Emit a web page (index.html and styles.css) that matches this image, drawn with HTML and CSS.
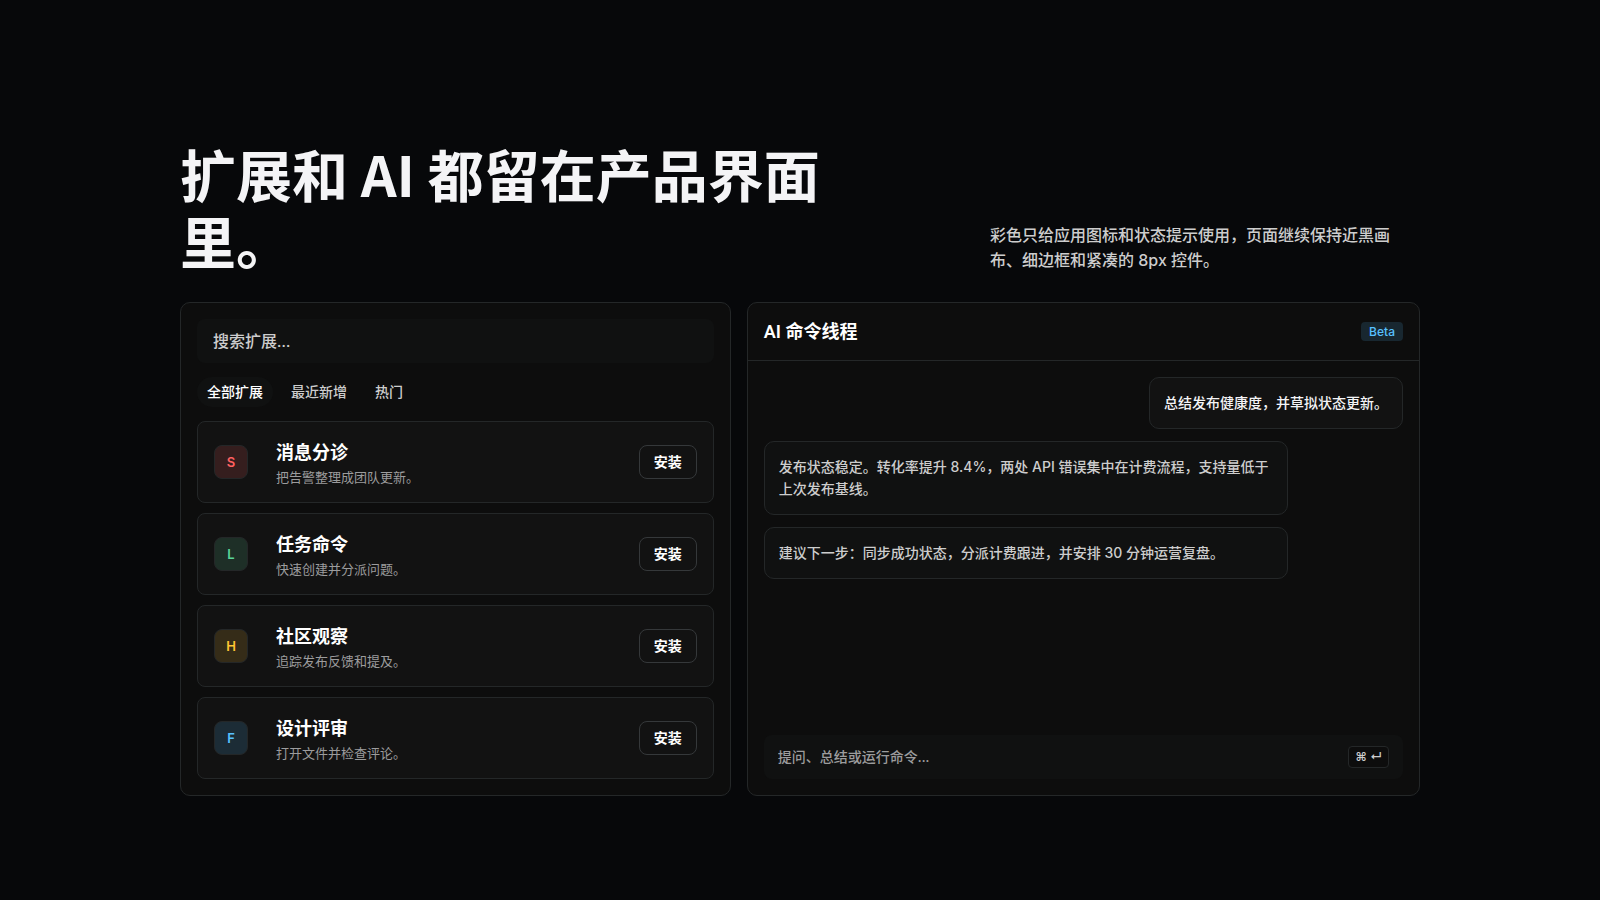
FILE: index.html
```html
<!DOCTYPE html>
<html lang="zh-CN">
<head>
    <meta charset="UTF-8">
    <meta name="viewport" content="width=device-width, initial-scale=1.0">
    <title>扩展和 AI</title>
    <link rel="stylesheet" href="styles.css">
</head>
<body>

    <main class="container">
        <header class="section-head">
            <h1>扩展和 AI 都留在产品界面里。</h1>
            <p>彩色只给应用图标和状态提示使用，页面继续保持近黑画布、细边框和紧凑的 8px 控件。</p>
        </header>

        <div class="panels">
            <section class="panel store">
                <input class="search" type="search" placeholder="搜索扩展..." aria-label="搜索扩展">
                <div class="tabs">
                    <button type="button" class="tab active">全部扩展</button>
                    <button type="button" class="tab">最近新增</button>
                    <button type="button" class="tab">热门</button>
                </div>
                <ul class="ext-list">
                    <li class="ext">
                        <span class="ext-icon red">S</span>
                        <div class="ext-text">
                            <h3>消息分诊</h3>
                            <p>把告警整理成团队更新。</p>
                        </div>
                        <button type="button" class="install-btn">安装</button>
                    </li>
                    <li class="ext">
                        <span class="ext-icon green">L</span>
                        <div class="ext-text">
                            <h3>任务命令</h3>
                            <p>快速创建并分派问题。</p>
                        </div>
                        <button type="button" class="install-btn">安装</button>
                    </li>
                    <li class="ext">
                        <span class="ext-icon yellow">H</span>
                        <div class="ext-text">
                            <h3>社区观察</h3>
                            <p>追踪发布反馈和提及。</p>
                        </div>
                        <button type="button" class="install-btn">安装</button>
                    </li>
                    <li class="ext">
                        <span class="ext-icon blue">F</span>
                        <div class="ext-text">
                            <h3>设计评审</h3>
                            <p>打开文件并检查评论。</p>
                        </div>
                        <button type="button" class="install-btn">安装</button>
                    </li>
                </ul>
            </section>

            <section class="panel chat">
                <div class="chat-head">
                    <h2>AI 命令线程</h2>
                    <span class="badge">Beta</span>
                </div>
                <div class="thread">
                    <p class="message user">总结发布健康度，并草拟状态更新。</p>
                    <p class="message reply">发布状态稳定。转化率提升 8.4%，两处 API 错误集中在计费流程，支持量低于上次发布基线。</p>
                    <p class="message reply">建议下一步：同步成功状态，分派计费跟进，并安排 30 分钟运营复盘。</p>
                </div>
                <div class="prompt">
                    <input type="text" placeholder="提问、总结或运行命令..." aria-label="提问、总结或运行命令">
                    <kbd>⌘ ↵</kbd>
                </div>
            </section>
        </div>
    </main>

</body>
</html>
```
FILE: styles.css
```css
* {
    box-sizing: border-box;
}
body {
    margin: 0;
    background-color: #07080a;
    color: #f4f4f6;
    font-family: Inter, "Noto Sans CJK SC", sans-serif;
    font-size: 16px;
    font-weight: 500;
}
h1, h2, h3, p, ul {
    margin: 0;
    padding: 0;
}
button, input {
    font-family: Roboto, "Noto Sans CJK SC", sans-serif;
    font-weight: 500;
}
button {
    cursor: pointer;
}
.container {
    max-width: 1288px;
    margin: 0 auto;
    padding: 139px 24px 96px;
}
.section-head {
    display: flex;
    justify-content: space-between;
    align-items: flex-end;
    gap: 32px;
    margin-bottom: 29px;
}
.section-head h1 {
    max-width: 680px;
    font-family: "Noto Sans CJK SC", sans-serif;
    font-size: 56px;
    font-weight: 600;
    line-height: 67px;
}
.section-head p {
    flex: 0 1 430px;
    padding-right: 24px;
    color: #cdcdcd;
    line-height: 25px;
}
.panels {
    display: grid;
    grid-template-columns: 9fr 11fr;
    gap: 16px;
}
.panel {
    min-width: 0;
    background-color: #0d0d0d;
    border: 1px solid #242728;
    border-radius: 10px;
}
.store {
    display: flex;
    flex-direction: column;
    gap: 14px;
    padding: 16px;
}
.search {
    width: 100%;
    height: 44px;
    padding: 0 16px;
    background-color: #101111;
    border: none;
    border-radius: 8px;
    color: #f4f4f6;
    font-size: 16px;
}
.search::placeholder {
    color: #cdcdcd;
}
.tabs {
    display: flex;
    gap: 8px;
}
.tab {
    height: 30px;
    padding: 0 10px 2px;
    background: none;
    border: none;
    border-radius: 15px;
    color: #cdcdcd;
    font-size: 14px;
}
.tab.active {
    background-color: #101111;
    color: #ffffff;
}
.ext-list {
    display: grid;
    gap: 10px;
    list-style: none;
}
.ext {
    display: flex;
    align-items: center;
    padding: 14px 16px;
    background-color: #121212;
    border: 1px solid #242728;
    border-radius: 8px;
}
.ext-icon {
    display: grid;
    place-items: center;
    width: 34px;
    height: 34px;
    margin-right: 28px;
    border: 1px solid #242728;
    border-radius: 8px;
    font-size: 13px;
    font-weight: 600;
}
.red {
    background-color: #351e1e;
    color: #ff6161;
}
.green {
    background-color: #1e2f27;
    color: #59d499;
}
.yellow {
    background-color: #352c18;
    color: #ffc533;
}
.blue {
    background-color: #1c2c36;
    color: #57c1ff;
}
.ext-text {
    flex: 1;
    padding-top: 4px;
}
.ext-text h3 {
    color: #ffffff;
    font-size: 18px;
    font-weight: 600;
    line-height: 26px;
}
.ext-text p {
    color: #9c9c9d;
    font-size: 13px;
    font-weight: 400;
    line-height: 22px;
}
.install-btn {
    height: 34px;
    padding: 0 14px 2px;
    background: none;
    border: 1px solid #35383a;
    border-radius: 8px;
    color: #ffffff;
    font-size: 14px;
    font-weight: 600;
}
.chat {
    display: flex;
    flex-direction: column;
}
.chat-head {
    display: flex;
    justify-content: space-between;
    align-items: center;
    height: 58px;
    padding: 0 16px;
    border-bottom: 1px solid #242728;
}
.chat-head h2 {
    padding-bottom: 3px;
    color: #ffffff;
    font-family: Roboto, "Noto Sans CJK SC", sans-serif;
    font-size: 18px;
    font-weight: 600;
}
.badge {
    padding: 0 8px;
    background-color: #182730;
    border-radius: 4px;
    color: #57c1ff;
    font-size: 12px;
    line-height: 19px;
}
.thread {
    flex: 1;
    display: flex;
    flex-direction: column;
    align-items: flex-start;
    gap: 12px;
    padding: 16px;
}
.message {
    max-width: 82%;
    padding: 14px;
    border: 1px solid #242728;
    border-radius: 10px;
    font-size: 14px;
    line-height: 22px;
}
.message.user {
    align-self: flex-end;
    background-color: #121212;
    color: #f4f4f6;
}
.message.reply {
    width: 82%;
    background-color: #101111;
    color: #cdcdcd;
}
.prompt {
    display: flex;
    align-items: center;
    height: 44px;
    margin: 0 16px 16px;
    padding: 0 14px;
    background-color: #101111;
    border-radius: 8px;
}
.prompt input {
    flex: 1;
    min-width: 0;
    padding: 0;
    background: none;
    border: none;
    color: #f4f4f6;
    font-size: 14px;
}
.prompt input::placeholder {
    color: #9c9c9d;
}
kbd {
    padding: 0 6px;
    background-color: #0d0d0d;
    border: 1px solid #242728;
    border-radius: 4px;
    color: #cdcdcd;
    font-family: inherit;
    font-size: 12px;
    font-weight: 600;
    line-height: 20px;
}
```
